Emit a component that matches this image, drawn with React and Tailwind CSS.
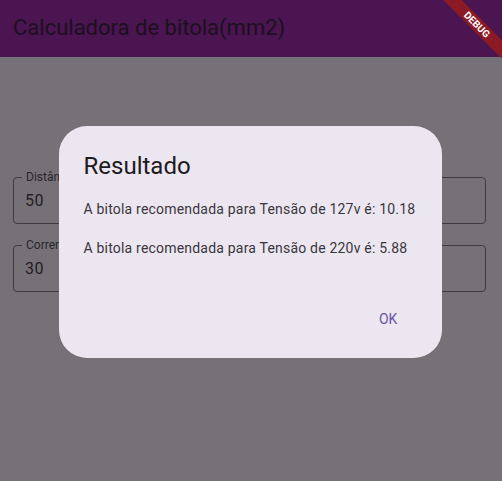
import React from "react";

const font = { fontFamily: "Roboto, 'Noto Sans', sans-serif" };

const Field = ({ label, value }) => (
  <div className="relative h-[47px] rounded-[4px] border border-[#3f3b41] flex items-center px-[11px]">
    <span className="absolute -top-[8px] left-[8px] px-[4px] bg-[#767177] text-[12px] leading-[14px] text-[#2a262c]">
      {label}
    </span>
    <span className="text-[16px] text-[#221e24] tracking-[0.5px]">{value}</span>
  </div>
);

export default function App() {
  return (
    <div
      className="relative w-[502px] h-[481px] overflow-hidden bg-[#767177] flex flex-col"
      style={font}
    >
      {/* App bar */}
      <div className="h-[57px] bg-[#4a1550] flex items-center px-[13px] shrink-0">
        <h1 className="text-[22px] text-[#1c1020] leading-none pb-[2px]">
          Calculadora de bitola(mm2)
        </h1>
      </div>

      {/* Form (behind the scrim) */}
      <div className="flex flex-col gap-[21px] px-[13px] pt-[120px] pr-[16px]">
        <Field label="Distância (m)" value="50" />
        <Field label="Corrente (A)" value="30" />
      </div>

      {/* Dialog */}
      <div className="absolute inset-0 top-[57px] flex items-start justify-center pt-[69px]">
        <div className="w-[383px] h-[232px] -ml-[2px] rounded-[28px] bg-[#ece6f0] px-[25px] pt-[24px] flex flex-col">
          <h2 className="text-[24px] leading-[32px] text-[#1d1b20]">Resultado</h2>
          <p className="mt-[17px] whitespace-nowrap text-[14px] leading-[20px] tracking-[0.2px] text-[#3a363c]">
            A bitola recomendada para Tensão de 127v é: 10.18
          </p>
          <p className="mt-[19px] whitespace-nowrap text-[14px] leading-[20px] tracking-[0.2px] text-[#3a363c]">
            A bitola recomendada para Tensão de 220v é: 5.88
          </p>
          <div className="flex justify-end mt-[51px] pr-[19px]">
            <button className="text-[14px] leading-[20px] tracking-[0.1px] font-normal text-[#6a55a6]">
              OK
            </button>
          </div>
        </div>
      </div>

      {/* Debug banner */}
      <div className="absolute top-0 right-0 w-[80px] h-[80px] overflow-hidden pointer-events-none">
        <div className="absolute top-[18px] -right-[30px] w-[110px] h-[13px] rotate-45 bg-[#8c1a25] flex items-center justify-center">
          <span className="text-[10px] font-bold text-white leading-none">DEBUG</span>
        </div>
      </div>
    </div>
  );
}
